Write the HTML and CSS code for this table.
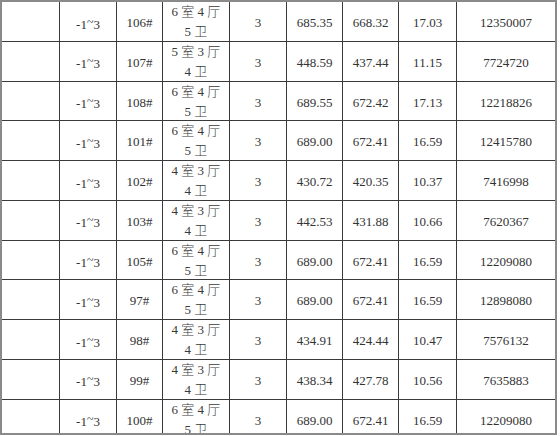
FILE: index.html
```html
<!DOCTYPE html>
<html lang="zh">
<head>
<meta charset="utf-8">
<title>户型面积表</title>
<link rel="stylesheet" href="styles.css">
</head>
<body>
<div class="frame">
  <div class="row"><div class="c"></div><div class="c"><span>-1<span class="tilde">~</span>3</span></div><div class="c">106#</div><div class="c plan">6 室 4 厅 5 卫</div><div class="c">3</div><div class="c">685.35</div><div class="c">668.32</div><div class="c">17.03</div><div class="c">12350007</div></div>
  <div class="row"><div class="c"></div><div class="c"><span>-1<span class="tilde">~</span>3</span></div><div class="c">107#</div><div class="c plan">5 室 3 厅 4 卫</div><div class="c">3</div><div class="c">448.59</div><div class="c">437.44</div><div class="c">11.15</div><div class="c">7724720</div></div>
  <div class="row"><div class="c"></div><div class="c"><span>-1<span class="tilde">~</span>3</span></div><div class="c">108#</div><div class="c plan">6 室 4 厅 5 卫</div><div class="c">3</div><div class="c">689.55</div><div class="c">672.42</div><div class="c">17.13</div><div class="c">12218826</div></div>
  <div class="row"><div class="c"></div><div class="c"><span>-1<span class="tilde">~</span>3</span></div><div class="c">101#</div><div class="c plan">6 室 4 厅 5 卫</div><div class="c">3</div><div class="c">689.00</div><div class="c">672.41</div><div class="c">16.59</div><div class="c">12415780</div></div>
  <div class="row"><div class="c"></div><div class="c"><span>-1<span class="tilde">~</span>3</span></div><div class="c">102#</div><div class="c plan">4 室 3 厅 4 卫</div><div class="c">3</div><div class="c">430.72</div><div class="c">420.35</div><div class="c">10.37</div><div class="c">7416998</div></div>
  <div class="row"><div class="c"></div><div class="c"><span>-1<span class="tilde">~</span>3</span></div><div class="c">103#</div><div class="c plan">4 室 3 厅 4 卫</div><div class="c">3</div><div class="c">442.53</div><div class="c">431.88</div><div class="c">10.66</div><div class="c">7620367</div></div>
  <div class="row"><div class="c"></div><div class="c"><span>-1<span class="tilde">~</span>3</span></div><div class="c">105#</div><div class="c plan">6 室 4 厅 5 卫</div><div class="c">3</div><div class="c">689.00</div><div class="c">672.41</div><div class="c">16.59</div><div class="c">12209080</div></div>
  <div class="row"><div class="c"></div><div class="c"><span>-1<span class="tilde">~</span>3</span></div><div class="c">97#</div><div class="c plan">6 室 4 厅 5 卫</div><div class="c">3</div><div class="c">689.00</div><div class="c">672.41</div><div class="c">16.59</div><div class="c">12898080</div></div>
  <div class="row"><div class="c"></div><div class="c"><span>-1<span class="tilde">~</span>3</span></div><div class="c">98#</div><div class="c plan">4 室 3 厅 4 卫</div><div class="c">3</div><div class="c">434.91</div><div class="c">424.44</div><div class="c">10.47</div><div class="c">7576132</div></div>
  <div class="row"><div class="c"></div><div class="c"><span>-1<span class="tilde">~</span>3</span></div><div class="c">99#</div><div class="c plan">4 室 3 厅 4 卫</div><div class="c">3</div><div class="c">438.34</div><div class="c">427.78</div><div class="c">10.56</div><div class="c">7635883</div></div>
  <div class="row"><div class="c"></div><div class="c"><span>-1<span class="tilde">~</span>3</span></div><div class="c">100#</div><div class="c plan">6 室 4 厅 5 卫</div><div class="c">3</div><div class="c">689.00</div><div class="c">672.41</div><div class="c">16.59</div><div class="c">12209080</div></div>
</div>
</body>
</html>
```
FILE: styles.css
```css
html, body {
  margin: 0;
  padding: 0;
  background: #ffffff;
}

body {
  font-family: "Liberation Serif", "Noto Sans CJK SC", serif;
  font-size: 13px;
  color: #333333;
}

.frame {
  box-sizing: border-box;
  width: 557px;
  height: 435px;
  border: 2px solid #8a8a8a;
  overflow: hidden;
}

.row {
  box-sizing: border-box;
  display: grid;
  grid-template-columns: 58px 57px 46px 67px 57px 56px 56px 58px 1fr;
  height: 39.75px;
  border-bottom: 1px solid #3a3a3a;
}

.c {
  box-sizing: border-box;
  display: flex;
  flex-direction: column;
  justify-content: center;
  align-items: center;
  text-align: center;
  padding: 2px 6px 0;
  line-height: 20px;
  border-right: 1px solid #3a3a3a;
  white-space: nowrap;
}

.c:last-child {
  border-right: none;
}

.plan {
  white-space: normal;
  padding-top: 0;
  font-weight: 300;
  color: #3a3a3a;
}

.tilde {
  vertical-align: 3px;
  font-size: 12px;
}
```
